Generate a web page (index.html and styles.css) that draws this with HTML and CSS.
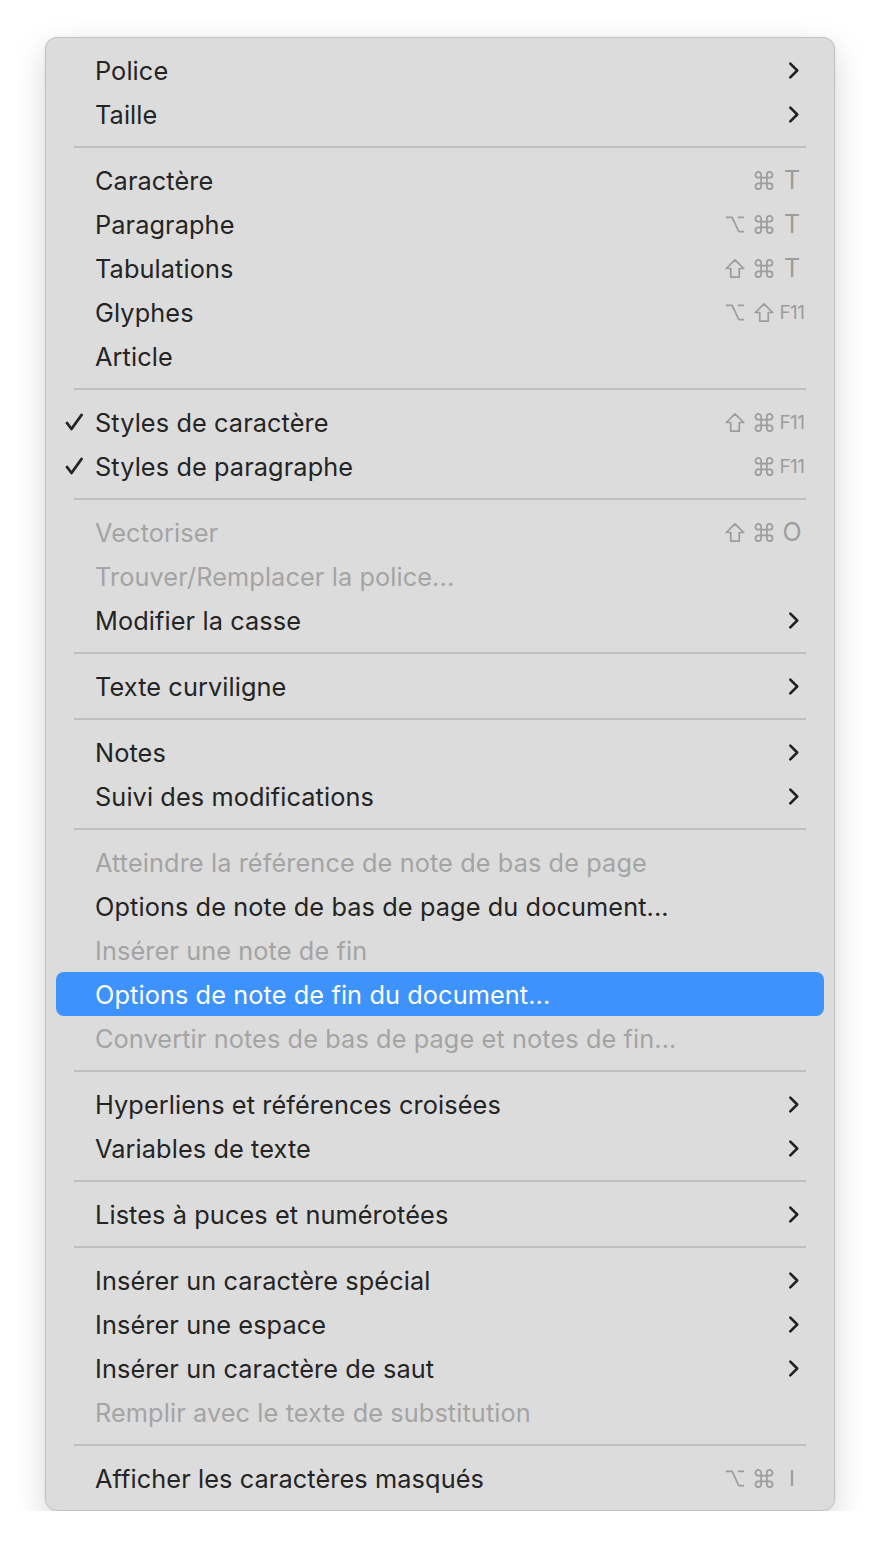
FILE: index.html
```html
<!DOCTYPE html>
<html lang="fr">

<head>
    <meta charset="UTF-8">
    <meta name="viewport" content="width=device-width, initial-scale=1.0">
    <title>Menu Texte</title>
    <link rel="stylesheet" href="styles.css">
</head>

<body>
    <div class="menu">
        <div class="item"><span class="check"></span><span class="label">Police</span><span class="keys"><span class="key"><svg class="chevron" viewBox="0 0 10 16"><path d="M2 1.5 L8.5 8 L2 14.5" /></svg></span></span></div>
        <div class="item"><span class="check"></span><span class="label">Taille</span><span class="keys"><span class="key"><svg class="chevron" viewBox="0 0 10 16"><path d="M2 1.5 L8.5 8 L2 14.5" /></svg></span></span></div>
        <div class="sep"></div>

        <div class="item"><span class="check"></span><span class="label">Caractère</span><span class="keys"><span class="mod"><svg viewBox="0 0 20 20"><path d="M7 7 V4 A3 3 0 1 0 4 7 H16 A3 3 0 1 0 13 4 V16 A3 3 0 1 0 16 13 H4 A3 3 0 1 0 7 16 Z" /></svg></span><span class="key">T</span></span></div>
        <div class="item"><span class="check"></span><span class="label">Paragraphe</span><span class="keys"><span class="mod"><svg viewBox="0 0 20 20"><path d="M0.5 2.5 H7 L14 17.5 H19.5 M13 2.5 H19.5" /></svg></span><span class="mod"><svg viewBox="0 0 20 20"><path d="M7 7 V4 A3 3 0 1 0 4 7 H16 A3 3 0 1 0 13 4 V16 A3 3 0 1 0 16 13 H4 A3 3 0 1 0 7 16 Z" /></svg></span><span class="key">T</span></span></div>
        <div class="item"><span class="check"></span><span class="label">Tabulations</span><span class="keys"><span class="mod"><svg viewBox="0 0 20 20"><path d="M10 1 L19.2 10 H14.5 V19 H5.5 V10 H0.8 Z" /></svg></span><span class="mod"><svg viewBox="0 0 20 20"><path d="M7 7 V4 A3 3 0 1 0 4 7 H16 A3 3 0 1 0 13 4 V16 A3 3 0 1 0 16 13 H4 A3 3 0 1 0 7 16 Z" /></svg></span><span class="key">T</span></span></div>
        <div class="item"><span class="check"></span><span class="label">Glyphes</span><span class="keys"><span class="mod"><svg viewBox="0 0 20 20"><path d="M0.5 2.5 H7 L14 17.5 H19.5 M13 2.5 H19.5" /></svg></span><span class="mod"><svg viewBox="0 0 20 20"><path d="M10 1 L19.2 10 H14.5 V19 H5.5 V10 H0.8 Z" /></svg></span><span class="key fn">F11</span></span></div>
        <div class="item"><span class="check"></span><span class="label">Article</span></div>
        <div class="sep"></div>

        <div class="item"><span class="check"><svg viewBox="0 0 18 18"><path d="M2 10 L6.5 16 L16.5 2" /></svg></span><span class="label">Styles de caractère</span><span class="keys"><span class="mod"><svg viewBox="0 0 20 20"><path d="M10 1 L19.2 10 H14.5 V19 H5.5 V10 H0.8 Z" /></svg></span><span class="mod"><svg viewBox="0 0 20 20"><path d="M7 7 V4 A3 3 0 1 0 4 7 H16 A3 3 0 1 0 13 4 V16 A3 3 0 1 0 16 13 H4 A3 3 0 1 0 7 16 Z" /></svg></span><span class="key fn">F11</span></span></div>
        <div class="item"><span class="check"><svg viewBox="0 0 18 18"><path d="M2 10 L6.5 16 L16.5 2" /></svg></span><span class="label">Styles de paragraphe</span><span class="keys"><span class="mod"><svg viewBox="0 0 20 20"><path d="M7 7 V4 A3 3 0 1 0 4 7 H16 A3 3 0 1 0 13 4 V16 A3 3 0 1 0 16 13 H4 A3 3 0 1 0 7 16 Z" /></svg></span><span class="key fn">F11</span></span></div>
        <div class="sep"></div>

        <div class="item disabled"><span class="check"></span><span class="label">Vectoriser</span><span class="keys"><span class="mod"><svg viewBox="0 0 20 20"><path d="M10 1 L19.2 10 H14.5 V19 H5.5 V10 H0.8 Z" /></svg></span><span class="mod"><svg viewBox="0 0 20 20"><path d="M7 7 V4 A3 3 0 1 0 4 7 H16 A3 3 0 1 0 13 4 V16 A3 3 0 1 0 16 13 H4 A3 3 0 1 0 7 16 Z" /></svg></span><span class="key">O</span></span></div>
        <div class="item disabled"><span class="check"></span><span class="label">Trouver/Remplacer la police...</span></div>
        <div class="item"><span class="check"></span><span class="label">Modifier la casse</span><span class="keys"><span class="key"><svg class="chevron" viewBox="0 0 10 16"><path d="M2 1.5 L8.5 8 L2 14.5" /></svg></span></span></div>
        <div class="sep"></div>

        <div class="item"><span class="check"></span><span class="label">Texte curviligne</span><span class="keys"><span class="key"><svg class="chevron" viewBox="0 0 10 16"><path d="M2 1.5 L8.5 8 L2 14.5" /></svg></span></span></div>
        <div class="sep"></div>

        <div class="item"><span class="check"></span><span class="label">Notes</span><span class="keys"><span class="key"><svg class="chevron" viewBox="0 0 10 16"><path d="M2 1.5 L8.5 8 L2 14.5" /></svg></span></span></div>
        <div class="item"><span class="check"></span><span class="label">Suivi des modifications</span><span class="keys"><span class="key"><svg class="chevron" viewBox="0 0 10 16"><path d="M2 1.5 L8.5 8 L2 14.5" /></svg></span></span></div>
        <div class="sep"></div>

        <div class="item disabled"><span class="check"></span><span class="label">Atteindre la référence de note de bas de page</span></div>
        <div class="item"><span class="check"></span><span class="label">Options de note de bas de page du document...</span></div>
        <div class="item disabled"><span class="check"></span><span class="label">Insérer une note de fin</span></div>
        <div class="item active"><span class="check"></span><span class="label">Options de note de fin du document...</span></div>
        <div class="item disabled"><span class="check"></span><span class="label">Convertir notes de bas de page et notes de fin...</span></div>
        <div class="sep"></div>

        <div class="item"><span class="check"></span><span class="label">Hyperliens et références croisées</span><span class="keys"><span class="key"><svg class="chevron" viewBox="0 0 10 16"><path d="M2 1.5 L8.5 8 L2 14.5" /></svg></span></span></div>
        <div class="item"><span class="check"></span><span class="label">Variables de texte</span><span class="keys"><span class="key"><svg class="chevron" viewBox="0 0 10 16"><path d="M2 1.5 L8.5 8 L2 14.5" /></svg></span></span></div>
        <div class="sep"></div>

        <div class="item"><span class="check"></span><span class="label">Listes à puces et numérotées</span><span class="keys"><span class="key"><svg class="chevron" viewBox="0 0 10 16"><path d="M2 1.5 L8.5 8 L2 14.5" /></svg></span></span></div>
        <div class="sep"></div>

        <div class="item"><span class="check"></span><span class="label">Insérer un caractère spécial</span><span class="keys"><span class="key"><svg class="chevron" viewBox="0 0 10 16"><path d="M2 1.5 L8.5 8 L2 14.5" /></svg></span></span></div>
        <div class="item"><span class="check"></span><span class="label">Insérer une espace</span><span class="keys"><span class="key"><svg class="chevron" viewBox="0 0 10 16"><path d="M2 1.5 L8.5 8 L2 14.5" /></svg></span></span></div>
        <div class="item"><span class="check"></span><span class="label">Insérer un caractère de saut</span><span class="keys"><span class="key"><svg class="chevron" viewBox="0 0 10 16"><path d="M2 1.5 L8.5 8 L2 14.5" /></svg></span></span></div>
        <div class="item disabled"><span class="check"></span><span class="label">Remplir avec le texte de substitution</span></div>
        <div class="sep"></div>

        <div class="item"><span class="check"></span><span class="label">Afficher les caractères masqués</span><span class="keys"><span class="mod"><svg viewBox="0 0 20 20"><path d="M0.5 2.5 H7 L14 17.5 H19.5 M13 2.5 H19.5" /></svg></span><span class="mod"><svg viewBox="0 0 20 20"><path d="M7 7 V4 A3 3 0 1 0 4 7 H16 A3 3 0 1 0 13 4 V16 A3 3 0 1 0 16 13 H4 A3 3 0 1 0 7 16 Z" /></svg></span><span class="key bar">I</span></span></div>
    </div>
</body>

</html>
```

FILE: styles.css
```css
body {
    margin: 0;
    padding: 0;
    background-color: #ffffff;
    font-family: Inter, "Noto Sans", sans-serif;
}

.menu {
    box-sizing: border-box;
    width: 790px;
    margin: 37px 0 0 45px;
    padding: 10px 10px 10px;
    background-color: #dcdcdc;
    border: 1px solid #c2c2c2;
    border-radius: 12px;
    box-shadow: 0 12px 32px rgba(0, 0, 0, 0.16), 0 0 2px rgba(0, 0, 0, 0.1);
}

.item {
    display: flex;
    align-items: center;
    height: 44px;
    padding: 0 18px 0 9px;
    border-radius: 8px;
    color: #242424;
    font-size: 25.3px;
    letter-spacing: 0.1px;
}

.item.disabled {
    color: #a4a4a4;
}

.item.active {
    background-color: #3d93fb;
    color: #ffffff;
}

.check {
    width: 30px;
    flex-shrink: 0;
    display: flex;
    align-items: center;
}

.check svg {
    width: 18px;
    height: 18px;
    fill: none;
    stroke: #242424;
    stroke-width: 2.8;
    stroke-linecap: round;
    stroke-linejoin: round;
}

.label {
    flex: 1;
    white-space: nowrap;
}

.keys {
    display: flex;
    align-items: center;
    color: #9c9c9c;
}

.mod {
    width: 29px;
    display: flex;
    align-items: center;
    justify-content: center;
}

.mod svg {
    width: 20px;
    height: 19px;
    fill: none;
    stroke: #9c9c9c;
    stroke-width: 1.8;
    stroke-linejoin: round;
}

.key {
    width: 28px;
    text-align: center;
    font-size: 25px;
    display: flex;
    align-items: center;
    justify-content: center;
}

.key.fn {
    font-size: 19px;
    letter-spacing: -0.5px;
}

.key.bar {
    font-size: 22px;
}

.chevron {
    width: 11px;
    height: 17px;
    margin-left: 3px;
    fill: none;
    stroke: #202020;
    stroke-width: 2.4;
    stroke-linecap: round;
    stroke-linejoin: round;
}

.sep {
    height: 22px;
    display: flex;
    align-items: center;
    margin: 0 18px;
}

.sep::before {
    content: "";
    flex: 1;
    height: 2px;
    background-color: #bfbfbf;
}
```
